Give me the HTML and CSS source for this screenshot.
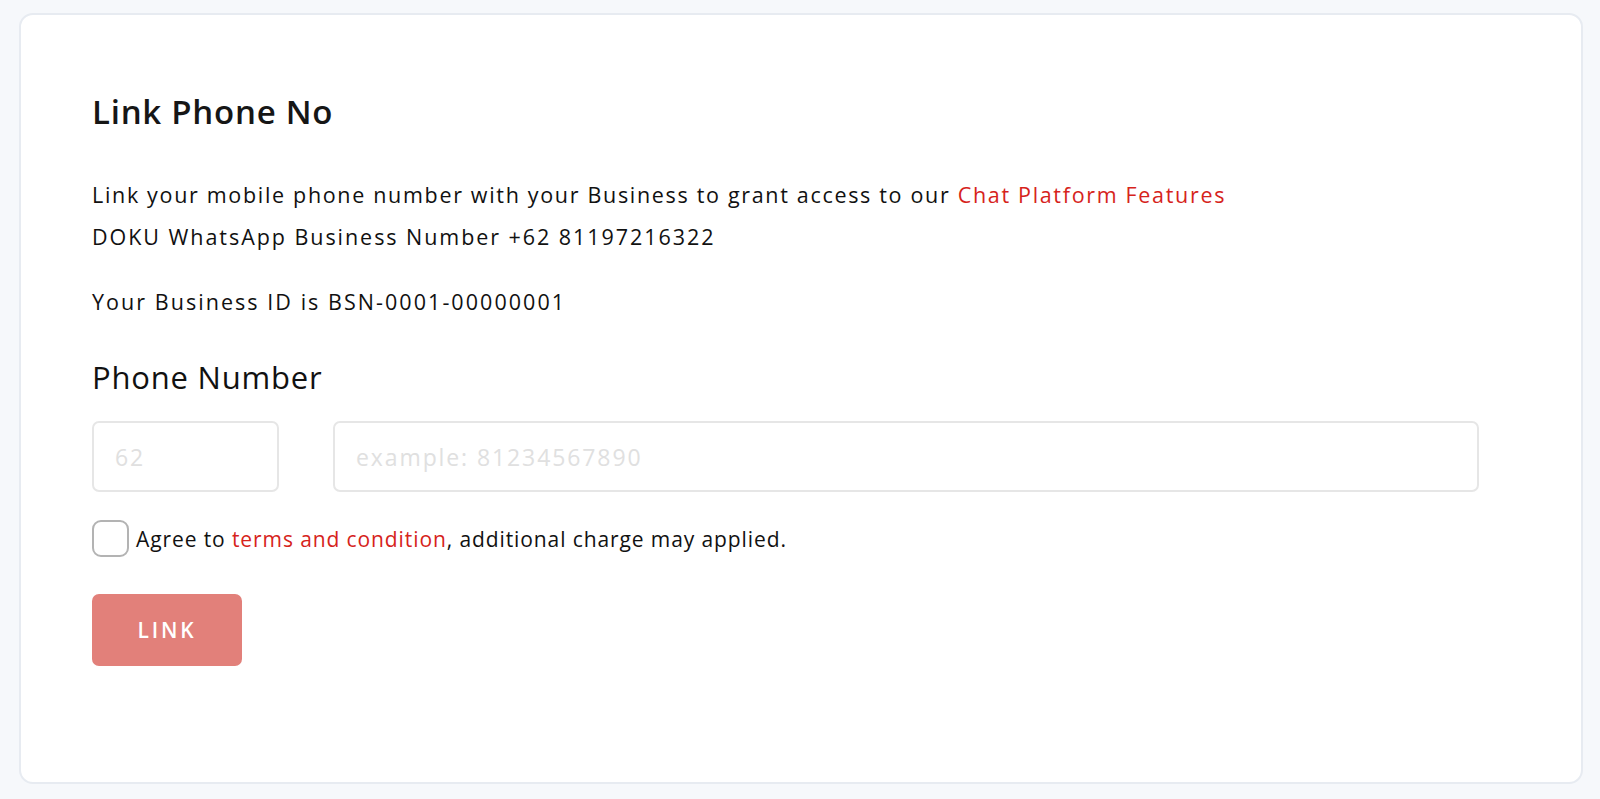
FILE: index.html
```html
<!DOCTYPE html>
<html>
<head>
<meta charset="utf-8">
<link rel="stylesheet" href="styles.css">
</head>
<body>
<div class="page">
  <div class="card">
    <h1 class="title">Link Phone No</h1>
    <p class="desc"><span class="l1">Link your mobile phone number with your Business to grant access to our <a class="red">Chat Platform Features</a></span><span class="l2">DOKU WhatsApp Business Number +62 81197216322</span></p>
    <p class="bid">Your Business ID is BSN-0001-00000001</p>
    <h2 class="label">Phone Number</h2>
    <div class="inputs">
      <div class="input code">62</div>
      <div class="input num">example: 81234567890</div>
    </div>
    <div class="agree">
      <span class="check"></span>
      <span>Agree to <a class="red">terms and condition</a>, additional charge may applied.</span>
    </div>
    <button class="btn">LINK</button>
  </div>
</div>
</body>
</html>
```
FILE: styles.css
```css
* { box-sizing: border-box; }
html, body { margin: 0; padding: 0; }
body {
  background: #f6f8fb;
  font-family: "Open Sans", "Liberation Sans", sans-serif;
  color: #111;
  width: 1600px;
  height: 799px;
  overflow: hidden;
}
.page { padding: 13px 17px 15px 19px; }
.card {
  background: #fff;
  border: 2px solid #e7ebf1;
  border-radius: 14px;
  height: 771px;
  padding: 77px 102px 0 71px;
}
.title {
  margin: 0;
  font-size: 33px;
  font-weight: 600;
  line-height: 40px;
  letter-spacing: 0.75px;
  color: #161616;
}
.desc {
  margin: 42px 0 0;
  font-size: 21.5px;
  line-height: 42px;
}
.l1, .l2 { display: block; white-space: nowrap; }
.l1 { letter-spacing: 1.68px; }
.l2 { letter-spacing: 1.95px; }
.bid {
  margin: 23px 0 0;
  font-size: 21.5px;
  line-height: 42px;
  letter-spacing: 2.05px;
}
.red { color: #d6231b; text-decoration: none; }
.label {
  margin: 34px 0 0;
  font-size: 31px;
  font-weight: 400;
  line-height: 40px;
  letter-spacing: 0.8px;
}
.inputs {
  display: flex;
  gap: 54px;
  margin-top: 24px;
}
.input {
  height: 71px;
  border: 2px solid #e6e6e6;
  border-radius: 7px;
  color: #e0e0e0;
  font-size: 23px;
  letter-spacing: 1.9px;
  display: flex;
  align-items: center;
  padding-left: 21px;
}
.code { width: 187px; }
.num { flex: 1; }
.agree {
  display: flex;
  align-items: center;
  gap: 7px;
  margin-top: 28px;
  font-size: 21px;
  letter-spacing: 0.9px;
}
.check {
  width: 37px;
  height: 37px;
  border: 2px solid #b3b3b3;
  border-radius: 9px;
  display: inline-block;
  flex: none;
}
.btn {
  margin-top: 37px;
  width: 150px;
  height: 72px;
  border: none;
  border-radius: 7px;
  background: #e2807a;
  color: #fff;
  font-family: inherit;
  font-size: 21px;
  font-weight: 600;
  letter-spacing: 2.8px;
  display: block;
}
```
